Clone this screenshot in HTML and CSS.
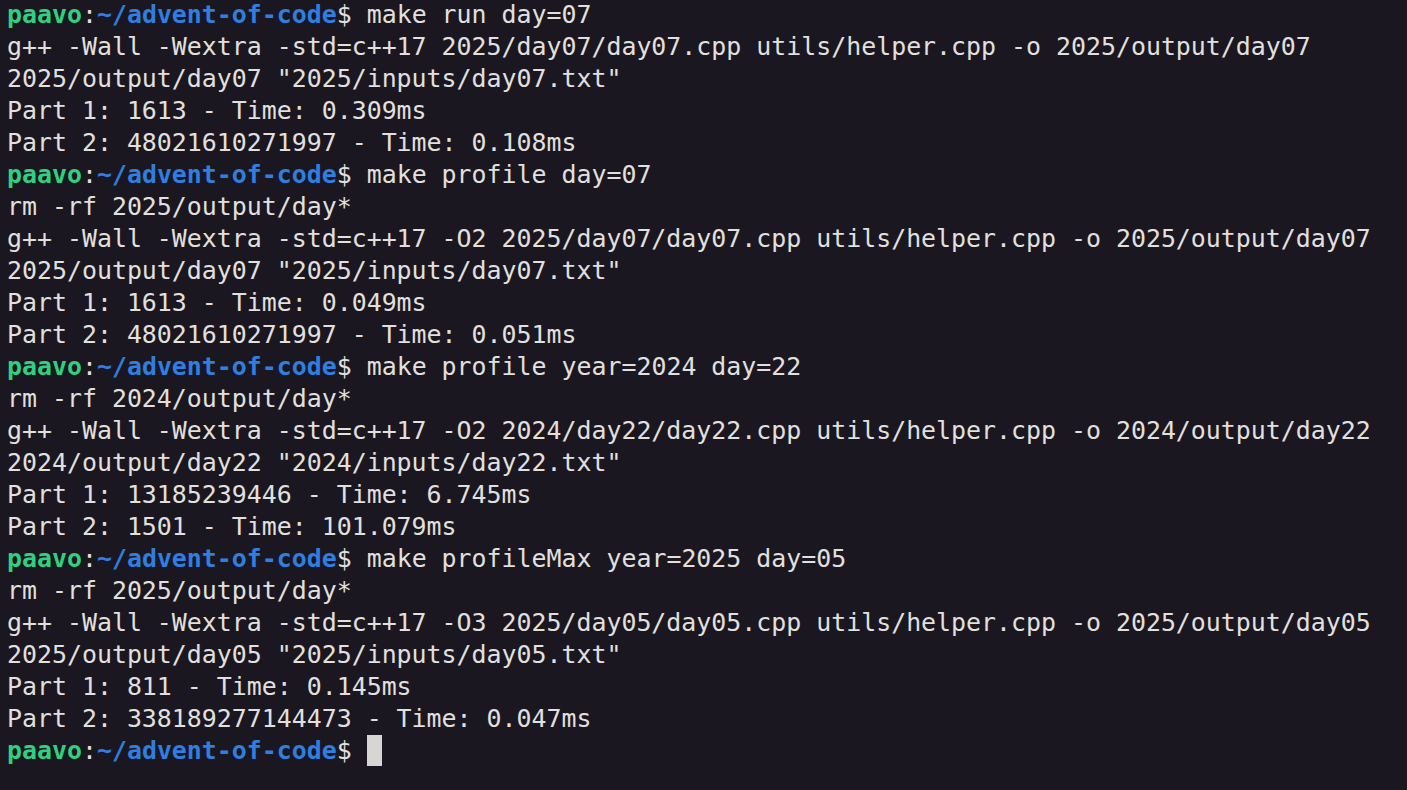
FILE: index.html
```html
<!DOCTYPE html>
<html>
<head>
<meta charset="utf-8">
<link rel="stylesheet" href="styles.css">
</head>
<body>
<div class="term">
<div class="line"><span class="user">paavo</span>:<span class="path">~/advent-of-code</span>$ make run day=07</div>
<div class="line">g++ -Wall -Wextra -std=c++17 2025/day07/day07.cpp utils/helper.cpp -o 2025/output/day07</div>
<div class="line">2025/output/day07 "2025/inputs/day07.txt"</div>
<div class="line">Part 1: 1613 - Time: 0.309ms</div>
<div class="line">Part 2: 48021610271997 - Time: 0.108ms</div>
<div class="line"><span class="user">paavo</span>:<span class="path">~/advent-of-code</span>$ make profile day=07</div>
<div class="line">rm -rf 2025/output/day*</div>
<div class="line">g++ -Wall -Wextra -std=c++17 -O2 2025/day07/day07.cpp utils/helper.cpp -o 2025/output/day07</div>
<div class="line">2025/output/day07 "2025/inputs/day07.txt"</div>
<div class="line">Part 1: 1613 - Time: 0.049ms</div>
<div class="line">Part 2: 48021610271997 - Time: 0.051ms</div>
<div class="line"><span class="user">paavo</span>:<span class="path">~/advent-of-code</span>$ make profile year=2024 day=22</div>
<div class="line">rm -rf 2024/output/day*</div>
<div class="line">g++ -Wall -Wextra -std=c++17 -O2 2024/day22/day22.cpp utils/helper.cpp -o 2024/output/day22</div>
<div class="line">2024/output/day22 "2024/inputs/day22.txt"</div>
<div class="line">Part 1: 13185239446 - Time: 6.745ms</div>
<div class="line">Part 2: 1501 - Time: 101.079ms</div>
<div class="line"><span class="user">paavo</span>:<span class="path">~/advent-of-code</span>$ make profileMax year=2025 day=05</div>
<div class="line">rm -rf 2025/output/day*</div>
<div class="line">g++ -Wall -Wextra -std=c++17 -O3 2025/day05/day05.cpp utils/helper.cpp -o 2025/output/day05</div>
<div class="line">2025/output/day05 "2025/inputs/day05.txt"</div>
<div class="line">Part 1: 811 - Time: 0.145ms</div>
<div class="line">Part 2: 338189277144473 - Time: 0.047ms</div>
<div class="line"><span class="user">paavo</span>:<span class="path">~/advent-of-code</span>$ <span class="cursor"></span></div>
</div>
</body>
</html>
```
FILE: styles.css
```css
html, body {
  margin: 0;
  padding: 0;
  background: #1a1720;
  height: 100%;
  overflow: hidden;
}
.term {
  padding: 0 0 0 7px;
  margin-top: -1px;
  font-family: "DejaVu Sans Mono", "Liberation Mono", monospace;
  font-size: 24.9px;
  line-height: 32px;
  color: #e2e0de;
}
.line {
  height: 32px;
  white-space: pre;
}
.user {
  color: #2fd07f;
  font-weight: bold;
}
.path {
  color: #2f7ee0;
  font-weight: bold;
}
.cursor {
  display: inline-block;
  width: 15px;
  height: 31px;
  background: #d8d6d4;
  vertical-align: top;
  margin-top: 0;
}
```
